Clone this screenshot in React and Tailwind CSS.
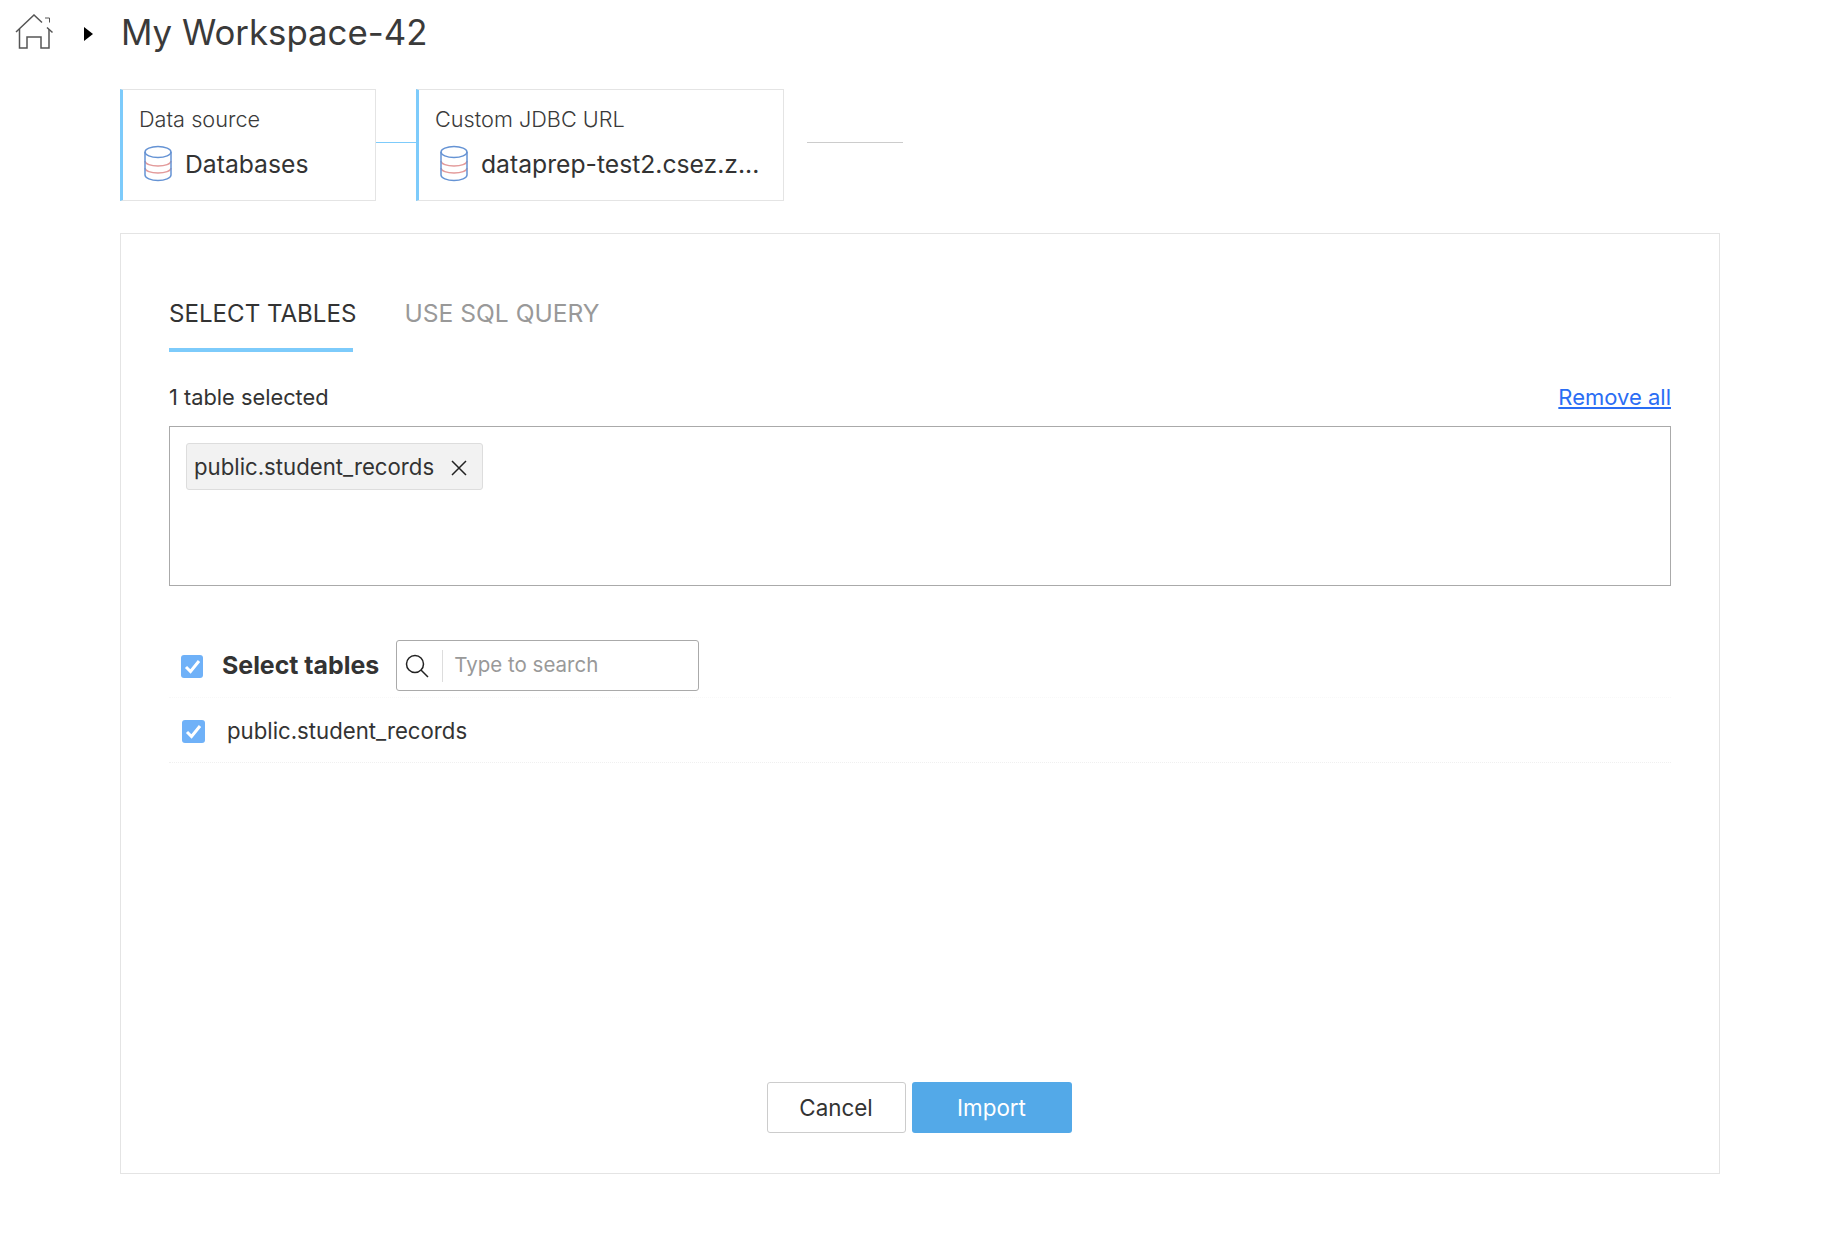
const fontCls = "font-['Inter','Liberation_Sans',sans-serif]";

const DbIcon = () => (
  <svg width="30" height="37" viewBox="0 0 30 37" fill="none" className="shrink-0">
    <path d="M2 16c0 3 6 5 13 5s13-2 13-5M2 23c0 3 6 5 13 5s13-2 13-5" stroke="#e39a9a" strokeWidth="1.5" />
    <ellipse cx="15" cy="7" rx="13" ry="5.500" stroke="#6593d4" strokeWidth="1.500" />
    <path d="M2 7v23c0 3 6 5.500 13 5.500s13-2.500 13-5.500V7" stroke="#6593d4" strokeWidth="1.500" />
  </svg>
);

const HomeIcon = () => (
  <svg width="40" height="37" viewBox="0 0 40 37" fill="none" stroke="#555" strokeWidth="1.500" className="shrink-0">
    <path d="M1 18 19 1 27 8.500M32 13.500l5.500 5" />
    <path d="M30 4h4.500v4.500" strokeWidth="1" />
    <path d="M4.500 15v19H12V23h14v11h8V15" />
  </svg>
);

const Check = ({ size }) => (
  <span className={`flex items-center justify-center rounded-[3px] bg-[#6fb1f8] shrink-0 ${size}`}>
    <svg width="17" height="15" viewBox="0 0 17 15" fill="none">
      <path d="M2 8 6.500 12.500 15 2" stroke="white" strokeWidth="3" />
    </svg>
  </span>
);

const StepCard = ({ label, value, width }) => (
  <div className={`h-[112px] border border-[#e4e4e4] border-l-[3px] border-l-[#7dcbfb] pl-[16px] pt-[14px] ${width}`}>
    <div className="text-[21.700px] leading-[30px] text-[#3a3a3a] font-light">{label}</div>
    <div className="flex items-center gap-[12px] mt-[11px] pl-[4px]">
      <DbIcon />
      <span className="text-[24.700px] leading-[36px] text-[#333] whitespace-nowrap">{value}</span>
    </div>
  </div>
);

export default function App() {
  return (
    <div className={`min-h-[1254px] bg-white text-[#333] ${fontCls}`}>
      {/* Breadcrumb */}
      <div className="flex items-center h-[56px] mt-[4px] pl-[15px]">
        <HomeIcon />
        <span className="ml-[29px] mt-[3px] w-0 h-0 border-y-[7px] border-y-transparent border-l-[9px] border-l-black" />
        <h1 className="ml-[28px] text-[34.800px] leading-[44px] font-normal text-[#3a3a3a]">My Workspace-42</h1>
      </div>

      {/* Steps */}
      <div className="flex items-start ml-[120px] mt-[29px]">
        <StepCard label="Data source" value="Databases" width="w-[256px]" />
        <div className="w-[40px] h-px bg-[#7dcbfb] mt-[53px]" />
        <StepCard label="Custom JDBC URL" value="dataprep-test2.csez.z..." width="w-[368px]" />
        <div className="w-[96px] h-px bg-[#ccc] mt-[53px] ml-[23px]" />
      </div>

      {/* Panel */}
      <div className="ml-[120px] mt-[32px] w-[1600px] h-[941px] border border-[#e4e4e4] px-[48px] flex flex-col">
        <div className="flex gap-[48px] mt-[63px] h-[34px]">
          <div className="text-[24.100px] leading-[34px] text-[#333]">SELECT TABLES</div>
          <div className="text-[24.600px] leading-[32px] text-[#999]">USE SQL QUERY</div>
        </div>
        <div className="w-[184px] h-[4px] bg-[#7dcbfb] mt-[17px]" />

        <div className="flex justify-between items-center mt-[29px] h-[32px] text-[21.800px]">
          <span>1 table selected</span>
          <a className="text-[22px] text-[#2a6df4] underline underline-offset-2">Remove all</a>
        </div>

        <div className="mt-[13px] h-[160px] border border-[#aaa] pl-[16px] pt-[16px]">
          <div className="inline-flex items-center h-[47px] pl-[7px] pr-[15px] bg-[#f2f2f2] border border-[#ddd] rounded-[3px] text-[22.200px]">
            public.student_records
            <svg width="16" height="16" viewBox="0 0 16 16" fill="none" stroke="#222" strokeWidth="1.500" className="ml-[17px] mt-[2px]">
              <path d="M1 1l14 14M15 1 1 15" />
            </svg>
          </div>
        </div>

        <div className="flex items-center mt-[54px] pl-[12px] h-[52px]">
          <Check size="w-[22px] h-[23px]" />
          <span className="ml-[19px] text-[24.900px] font-bold text-[#333]">Select tables</span>
          <div className="ml-[17px] w-[303px] h-[51px] self-start border border-[#aaa] rounded-[3px] flex items-center">
            <svg width="24" height="24" viewBox="0 0 24 24" fill="none" stroke="#222" strokeWidth="1.500" className="ml-[8px] shrink-0">
              <circle cx="10" cy="10" r="8.500" />
              <path d="m16 16 7 7" />
            </svg>
            <span className="ml-[13px] w-px h-[32px] bg-[#ddd]" />
            <span className="ml-[11px] text-[20.500px] text-[#999]">Type to search</span>
          </div>
        </div>

        <div className="flex items-center h-[66px] pl-[13px] pt-[2px] mt-[5px] border-t border-b border-dotted border-t-[#f8f8f8] border-b-[#f0f0f0]">
          <Check size="w-[23px] h-[23px]" />
          <span className="ml-[22px] text-[22.200px]">public.student_records</span>
        </div>

        <div className="mt-auto mb-[40px] flex justify-center gap-[6px] pr-[2px]">
          <button className="w-[139px] h-[51px] border border-[#ccc] rounded-[3px] text-[22.400px] text-[#333]">Cancel</button>
          <button className="w-[160px] h-[51px] rounded-[3px] bg-[#53a9e8] text-[22.400px] text-white">Import</button>
        </div>
      </div>
    </div>
  );
}
